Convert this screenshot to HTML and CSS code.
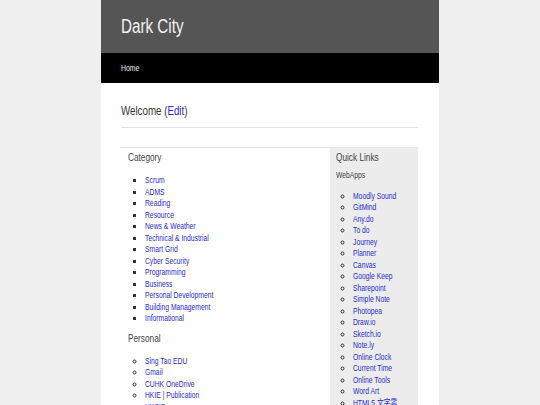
FILE: index.html
```html
<!DOCTYPE html>
<html>
<head>
<meta charset="utf-8">
<link rel="stylesheet" href="styles.css">
</head>
<body>
<div class="page">
  <header class="masthead"><h1 class="site-title">Dark City</h1></header>
  <nav class="topnav"><a class="nav-link">Home</a></nav>
  <main class="content">
    <h2 class="page-title"><span class="squeeze">Welcome (<a class="link-plain">Edit</a>)</span></h2>
    <div class="rule"></div>
    <div class="panel">
      <section class="main-col">
        <h3 class="col-title"><span class="squeeze">Category</span></h3>
        <ul class="list square">
          <li><a class="link">Scrum</a></li>
          <li><a class="link">ADMS</a></li>
          <li><a class="link">Reading</a></li>
          <li><a class="link">Resource</a></li>
          <li><a class="link">News &amp; Weather</a></li>
          <li><a class="link">Technical &amp; Industrial</a></li>
          <li><a class="link">Smart Grid</a></li>
          <li><a class="link">Cyber Security</a></li>
          <li><a class="link">Programming</a></li>
          <li><a class="link">Business</a></li>
          <li><a class="link">Personal Development</a></li>
          <li><a class="link">Building Management</a></li>
          <li><a class="link">Informational</a></li>
        </ul>
        <h3 class="col-title"><span class="squeeze">Personal</span></h3>
        <ul class="list circle">
          <li><a class="link">Sing Tao EDU</a></li>
          <li><a class="link">Gmail</a></li>
          <li><a class="link">CUHK OneDrive</a></li>
          <li><a class="link">HKIE | Publication</a></li>
          <li><a class="link">HKSIS</a></li>
        </ul>
      </section>
      <aside class="side-col">
        <h3 class="col-title"><span class="squeeze">Quick Links</span></h3>
        <h4 class="sub-title"><span class="squeeze">WebApps</span></h4>
        <ul class="list circle side-list">
          <li><a class="link">Moodly Sound</a></li>
          <li><a class="link">GitMind</a></li>
          <li><a class="link">Any.do</a></li>
          <li><a class="link">To do</a></li>
          <li><a class="link">Journey</a></li>
          <li><a class="link">Planner</a></li>
          <li><a class="link">Canvas</a></li>
          <li><a class="link">Google Keep</a></li>
          <li><a class="link">Sharepoint</a></li>
          <li><a class="link">Simple Note</a></li>
          <li><a class="link">Photopea</a></li>
          <li><a class="link">Draw.io</a></li>
          <li><a class="link">Sketch.io</a></li>
          <li><a class="link">Note.ly</a></li>
          <li><a class="link">Online Clock</a></li>
          <li><a class="link">Current Time</a></li>
          <li><a class="link">Online Tools</a></li>
          <li><a class="link">Word Art</a></li>
          <li><a class="link">HTML5 文字雲</a></li>
          <li><a class="link">Calendar</a></li>
        </ul>
      </aside>
    </div>
  </main>
</div>
</body>
</html>
```
FILE: styles.css
```css
html, body {
  margin: 0;
  padding: 0;
  background: #efefef;
  font-family: "Liberation Sans", Arial, "Noto Sans CJK TC", sans-serif;
}
.page {
  width: 338px;
  margin: 0 auto;
  background: #fff;
  min-height: 405px;
}
.squeeze,
.link,
.nav-link,
.site-title {
  display: inline-block;
  transform: scaleX(0.78);
  transform-origin: 0 50%;
  white-space: nowrap;
}
.masthead {
  background: #555;
  height: 53px;
  display: flex;
  align-items: center;
  padding-left: 20px;
}
.site-title {
  margin: 0;
  color: #f2f2f2;
  font-weight: normal;
  font-size: 19.5px;
}
.topnav {
  background: #000;
  height: 30px;
  display: flex;
  align-items: center;
  padding-left: 20px;
}
.nav-link {
  color: #eee;
  font-size: 8.8px;
}
.content {
  padding: 0 21px 0 20px;
}
.page-title {
  margin: 0;
  padding-top: 19px;
  height: 24px;
  font-weight: normal;
  font-size: 13px;
  color: #333;
  line-height: 17px;
}
.squeeze { transform: scaleX(0.75); }
.link-plain {
  color: #2b2bd2;
  text-decoration: none;
}
.link {
  color: #2b2bd2;
  text-decoration: none;
  transform: scaleX(0.75);
}
.rule {
  height: 1px;
  background: #e4e4e4;
  margin-top: 1px;
}
.panel {
  margin-top: 19px;
  display: flex;
  border-top: 1px solid #e6e6e6;
  min-height: 300px;
}
.main-col {
  width: 209px;
  padding-left: 7px;
  box-sizing: border-box;
}
.side-col {
  flex: 1;
  background: #ececec;
  padding-left: 6px;
}
.col-title {
  margin: 0;
  padding-top: 2px;
  font-weight: normal;
  font-size: 11px;
  line-height: 15px;
  color: #444;
}
.sub-title {
  margin: 4px 0 0;
  font-weight: normal;
  font-size: 9px;
  line-height: 12px;
  color: #444;
}
.list {
  margin: 10px 0 4px;
  padding-left: 17px;
  font-size: 9px;
  line-height: 11.5px;
  color: #333;
}
.side-list { margin-top: 9.5px; }
.square { list-style: square; }
.circle { list-style: circle; }
```
